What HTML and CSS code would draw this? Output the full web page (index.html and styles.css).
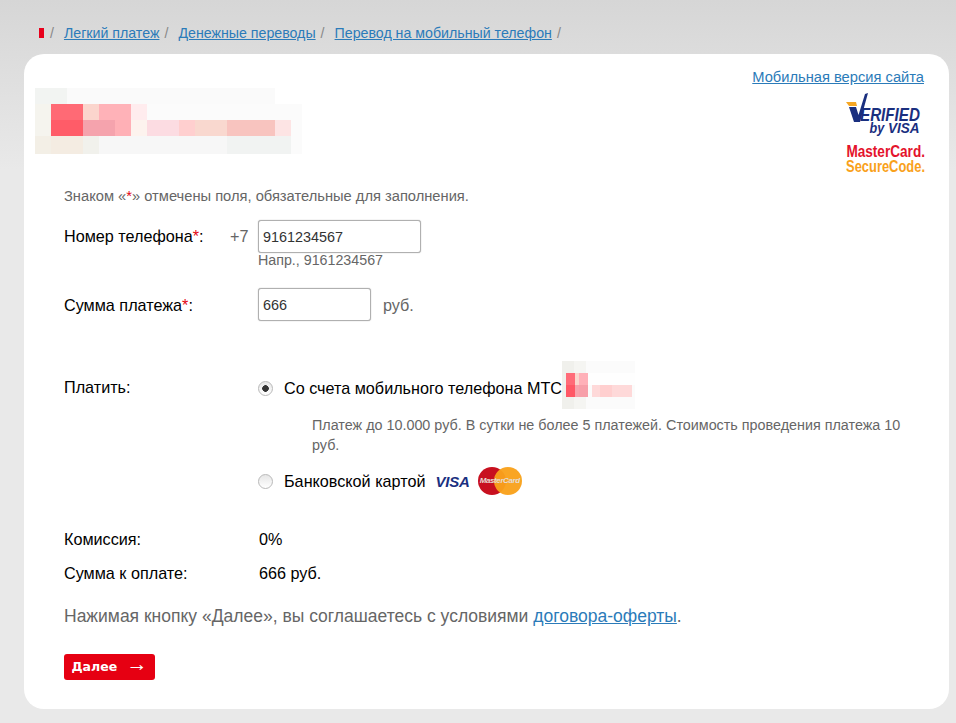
FILE: index.html
```html
<!DOCTYPE html>
<html lang="ru">
<head>
    <meta charset="UTF-8">
    <meta name="viewport" content="width=device-width, initial-scale=1.0">
    <title>Перевод на мобильный телефон</title>
    <link rel="stylesheet" href="styles.css">
</head>
<body>
    <nav class="crumbs">
        <span class="crumb-mark"></span><span class="sep">/</span>
        <a href="#">Легкий платеж</a><span class="sep">/</span>
        <a href="#">Денежные переводы</a><span class="sep">/</span>
        <a href="#">Перевод на мобильный телефон</a><span class="sep">/</span>
    </nav>
    <main class="card">
        <header class="top">
            <svg class="logo-blur" width="267" height="66" viewBox="0 0 267 66" shape-rendering="crispEdges">
                <rect y="16" width="267" height="50" fill="#fbfbfb"/>
                <rect width="240" height="16" fill="#fafafa"/>
                <rect width="32" height="16" fill="#f2f4f2"/>
                <rect y="16" width="16" height="32" fill="#f5f4ee"/>
                <rect x="16" y="16" width="32" height="16" fill="#ff6a75"/>
                <rect x="48" y="16" width="16" height="16" fill="#fbd5cd"/>
                <rect x="64" y="16" width="32" height="16" fill="#ffb2b8"/>
                <rect x="96" y="16" width="16" height="16" fill="#ffecee"/>
                <rect x="16" y="32" width="32" height="16" fill="#ff5c68"/>
                <rect x="48" y="32" width="32" height="16" fill="#f5a3ad"/>
                <rect x="80" y="32" width="16" height="16" fill="#ffb0b6"/>
                <rect x="96" y="32" width="16" height="16" fill="#fdf3ee"/>
                <rect x="112" y="32" width="32" height="16" fill="#fcdce2"/>
                <rect x="144" y="32" width="16" height="16" fill="#ffcfcf"/>
                <rect x="160" y="32" width="32" height="16" fill="#f9d8cf"/>
                <rect x="192" y="32" width="48" height="16" fill="#f8c4bf"/>
                <rect x="240" y="32" width="16" height="16" fill="#fde4e4"/>
                <rect y="48" width="16" height="18" fill="#f3efe6"/>
                <rect x="16" y="48" width="32" height="18" fill="#f4ece2"/>
                <rect x="48" y="48" width="16" height="18" fill="#f1f1ec"/>
                <rect x="64" y="48" width="128" height="18" fill="#f7f7f7"/>
                <rect x="192" y="48" width="64" height="18" fill="#f1f3f2"/>
                <rect x="240" y="0" width="27" height="16" fill="#ffffff"/>
            </svg>
            <div class="top-right">
                <a href="#" class="mobile-link">Мобильная версия сайта</a>
                <div class="vbv">
                    <svg class="vbv-check" width="28" height="30" viewBox="0 0 28 30">
                        <path d="M0 9h10l1 4H3z" fill="#f5a623"/>
                        <path d="M3 14h7l2.5 8L19 1l3-1-8 29H8z" fill="#1a2f7f"/>
                    </svg>
                    <span class="vbv-line1">ERIFIED</span>
                    <span class="vbv-line2"><small>by</small> VISA</span>
                </div>
                <div class="msc">
                    <span class="msc-line1">MasterCard.</span>
                    <span class="msc-line2">SecureCode.</span>
                </div>
            </div>
        </header>

        <p class="note">Знаком «<em>*</em>» отмечены поля, обязательные для заполнения.</p>

        <div class="row row-phone">
            <label class="label">Номер телефона<em>*</em>:</label>
            <span class="prefix">+7</span>
            <div>
                <input class="field field-wide" value="9161234567">
                <div class="hint">Напр., 9161234567</div>
            </div>
        </div>

        <div class="row row-sum">
            <label class="label label-full">Сумма платежа<em>*</em>:</label>
            <input class="field field-short" value="666">
            <span class="unit">руб.</span>
        </div>

        <div class="row row-pay">
            <div class="label label-full">Платить:</div>
            <div class="options">
                <label class="option">
                    <input type="radio" name="pay" checked>
                    <span>Со счета мобильного телефона МТС</span>
                    <svg class="phone-blur" width="73" height="48" viewBox="0 0 73 48" shape-rendering="crispEdges">
                        <rect width="73" height="48" fill="#fbfbfb"/>
                        <rect width="12" height="48" fill="#f0f0ec"/>
                        <rect x="12" width="12" height="48" fill="#f5f5f2"/>
                        <rect x="4" y="12" width="9" height="12" fill="#ff6b78"/>
                        <rect x="4" y="24" width="9" height="12" fill="#ff5866"/>
                        <rect x="13" y="12" width="4" height="12" fill="#fbd5cd"/>
                        <rect x="13" y="24" width="4" height="12" fill="#f7a3ad"/>
                        <rect x="17" y="12" width="9" height="12" fill="#ffb0b8"/>
                        <rect x="17" y="24" width="9" height="12" fill="#f79fa9"/>
                        <rect x="30" y="24" width="40" height="12" fill="#fed9d9"/>
                        <rect x="38" y="24" width="12" height="12" fill="#ffcfcf"/>
                        <rect x="26" y="12" width="47" height="12" fill="#fefefe"/>
                    </svg>
                </label>
                <p class="option-note">Платеж до 10.000 руб. В сутки не более 5 платежей. Стоимость проведения платежа 10 руб.</p>
                <label class="option option-card">
                    <input type="radio" name="pay">
                    <span>Банковской картой</span>
                    <span class="visa-mark">VISA</span>
                    <span class="mc-mark"><b></b><b></b><span>MasterCard</span></span>
                </label>
            </div>
        </div>

        <div class="row row-fee">
            <div class="label label-full">Комиссия:</div>
            <div class="value">0%</div>
        </div>
        <div class="row row-total">
            <div class="label label-full">Сумма к оплате:</div>
            <div class="value">666 руб.</div>
        </div>

        <p class="agree">Нажимая кнопку «Далее», вы соглашаетесь с условиями <a href="#">договора-оферты</a>.</p>

        <button class="next" type="button">Далее <span class="arrow">→</span></button>
    </main>
</body>
</html>
```

FILE: styles.css
```css
* {
    box-sizing: border-box;
}
body {
    margin: 0;
    height: 723px;
    overflow: hidden;
    background: #e9e9e9 linear-gradient(#d6d6d6 0, #e9e9e9 170px) no-repeat;
    font-family: "Liberation Sans", Arial, sans-serif;
    font-size: 16.2px;
    color: #000;
}
a {
    color: #2b7bb9;
}
em {
    color: #e30613;
    font-style: normal;
}

/* breadcrumbs */
.crumbs {
    display: flex;
    align-items: center;
    height: 54px;
    padding: 16px 0 4px 39px;
    font-size: 14.2px;
    color: #888;
}
.crumb-mark {
    width: 5px;
    height: 10px;
    background: #e8001c;
}
.sep {
    margin: 0 5px 0 5px;
}
.crumbs a {
    margin-left: 5px;
}
.crumb-mark + .sep {
    margin: 0 5px 0 6px;
}

/* card */
.card {
    width: 925px;
    height: 655px;
    margin-left: 24px;
    padding: 0 40px;
    background: #fff;
    border-radius: 20px;
}
.top {
    position: relative;
    height: 134px;
}
.logo-blur {
    position: absolute;
    left: -29px;
    top: 34px;
}
.top-right {
    position: absolute;
    right: -15px;
    top: 15px;
    display: flex;
    flex-direction: column;
    align-items: flex-end;
}
.mobile-link {
    font-size: 14.7px;
    line-height: 17px;
}

/* card scheme logos, squeezed text on a tight line */
.vbv {
    position: relative;
    display: flex;
    flex-direction: column;
    align-items: flex-end;
    width: 74px;
    height: 42px;
    margin: 7px 4px 0 0;
    padding-top: 14px;
    color: #1a2f7f;
    font-weight: bold;
    font-style: italic;
    white-space: nowrap;
}
.vbv-check {
    position: absolute;
    left: 0;
    top: 0;
}
.vbv-line1 {
    font-size: 19px;
    line-height: 15px;
    transform: scaleX(0.8);
    transform-origin: right;
}
.vbv-line2 {
    font-size: 15px;
    line-height: 12px;
    transform: scaleX(0.9);
    transform-origin: right;
}
.vbv-line2 small {
    font-size: 14px;
}
.msc {
    width: 80px;
    margin: 9px -1px 0 0;
    font-weight: bold;
    font-size: 17px;
    line-height: 15px;
    white-space: nowrap;
}
.msc-line1,
.msc-line2 {
    display: flex;
    justify-content: flex-end;
    transform-origin: right;
}
.msc-line1 {
    color: #e4132c;
    transform: scaleX(0.8);
}
.msc-line2 {
    color: #f9a11b;
    transform: scaleX(0.76);
}

.note {
    margin: 0;
    font-size: 14.7px;
    line-height: 16px;
    color: #666;
}

/* form rows */
.row {
    display: flex;
    align-items: flex-start;
}
.label {
    width: 166px;
    line-height: 18px;
}
.label-full {
    width: 194px;
}
.prefix {
    width: 28px;
    color: #666;
    line-height: 18px;
}
.row-phone {
    margin-top: 16px;
    height: 68px;
}
.row-phone .label,
.row-phone .prefix {
    margin-top: 7px;
}
.row-sum {
    height: 81px;
}
.row-sum .label,
.row-sum .unit {
    margin-top: 8px;
}
.field {
    display: block;
    height: 33px;
    padding: 0 4px;
    border: 1px solid #b0b0b0;
    border-radius: 3px;
    box-shadow: 0 0 1px #999;
    font-family: inherit;
    font-size: 14.4px;
    color: #333;
}
.field-wide {
    width: 163px;
}
.field-short {
    width: 113px;
}
.hint {
    font-size: 14.25px;
    line-height: 15px;
    color: #666;
}
.unit {
    margin-left: 12px;
    color: #666;
}

.row-pay {
    height: 152px;
    margin-bottom: 9px;
}
.row-pay .label {
    margin-top: 9px;
}
.options {
    flex: 1;
}
.option {
    display: flex;
    align-items: center;
    height: 18px;
    margin-top: 10px;
}
.option input {
    appearance: none;
    width: 15px;
    height: 15px;
    margin: 0 11px 0 0;
    border: 1px solid #b9b9b9;
    border-radius: 50%;
    background: linear-gradient(#e6e6e6, #fff);
    flex: none;
}
.option input:checked {
    background: radial-gradient(circle, #333 0 3px, transparent 3.6px), linear-gradient(#e6e6e6, #fff);
}
.phone-blur {
    margin: -6px 0 0 0;
    flex: none;
}
.option-note {
    margin: 18px 0 0 54px;
    font-size: 14.35px;
    line-height: 20px;
    color: #666;
}
.option-card {
    margin-top: 17px;
}
.visa-mark {
    margin-left: 10px;
    font-weight: bold;
    font-style: italic;
    font-size: 15px;
    letter-spacing: -0.2px;
    color: #1a2f7f;
}
.mc-mark {
    position: relative;
    display: inline-block;
    width: 44px;
    height: 28px;
    margin-left: 8px;
    flex: none;
}
.mc-mark b {
    position: absolute;
    top: 0;
    left: 0;
    width: 28px;
    height: 28px;
    border-radius: 50%;
    background: #c8101f;
}
.mc-mark b + b {
    left: 16px;
    background: #f9a11b;
    opacity: 0.96;
}
.mc-mark span {
    position: absolute;
    left: 0;
    top: 9px;
    width: 44px;
    font-size: 8px;
    line-height: 10px;
    font-weight: bold;
    font-style: italic;
    letter-spacing: -0.4px;
    text-align: center;
    color: #e6dcd4;
    white-space: nowrap;
}

.row-fee,
.row-total {
    height: 34px;
    line-height: 18px;
}
.value {
    margin-left: 1px;
}

.agree {
    margin: 8px 0 0;
    font-size: 17.5px;
    line-height: 20px;
    color: #666;
}
.next {
    display: block;
    width: 91px;
    height: 26px;
    margin-top: 28px;
    padding: 0 0 3px;
    border: 0;
    border-radius: 3px;
    background: #e60012;
    color: #fff;
    font-family: "DejaVu Sans", sans-serif;
    font-size: 12.5px;
    font-weight: bold;
}
.arrow {
    margin-left: 5px;
    font-family: "Liberation Sans", sans-serif;
    font-weight: normal;
    font-size: 21px;
    line-height: 14px;
}
```
